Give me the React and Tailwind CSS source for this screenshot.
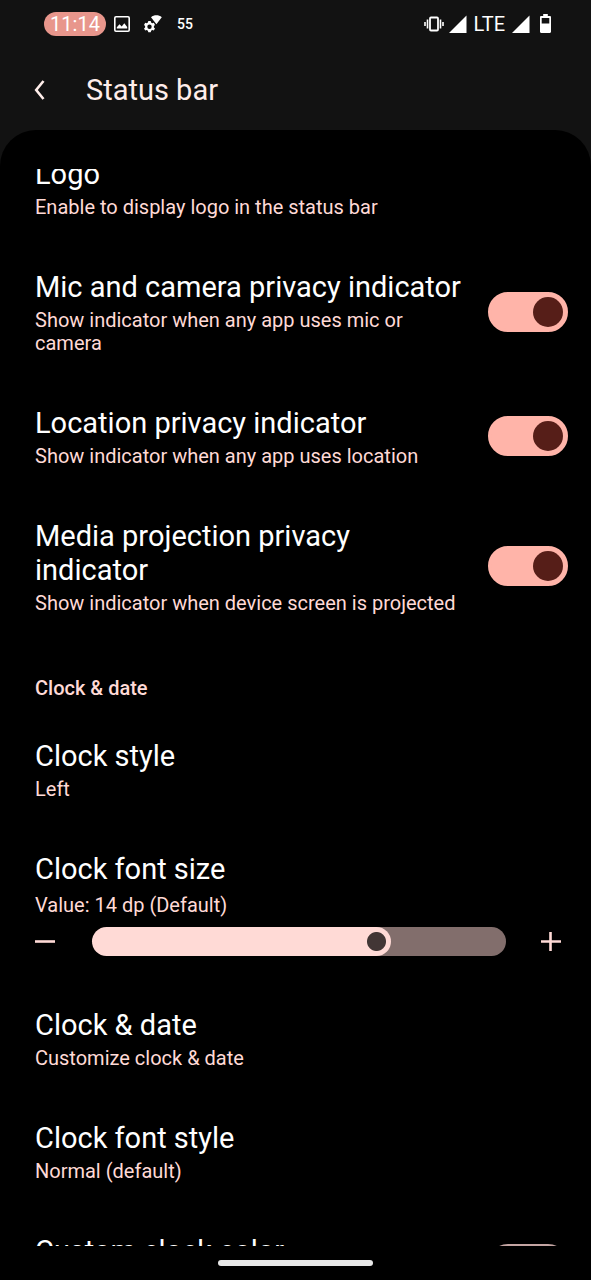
import React, { useState } from "react";

function Switch({ label, checked, onChange }) {
  return (
    <input
      type="checkbox"
      role="switch"
      aria-label={label}
      checked={checked}
      onChange={onChange}
      className="h-10 w-20 shrink-0 cursor-pointer appearance-none rounded-full border-[3px] border-[#c4a5a3] bg-[#2b2221] p-[2px] before:block before:size-[30px] before:rounded-full before:bg-[#a08c8a] checked:border-[#ffb4a9] checked:bg-[#ffb4a9] checked:before:translate-x-10 checked:before:bg-[#561e18]"
    />
  );
}

function Preference({ title, summary, toggle, initial = true }) {
  const [on, setOn] = useState(initial);
  return (
    <section className="flex items-center gap-6 pt-6 pr-[23px] pb-[25px] pl-[35px]">
      <div className="flex flex-1 flex-col gap-[5px] pt-[2px]">
        <h2 className="text-[29px] leading-[34px] text-white">{title}</h2>
        <p className="text-[20px] leading-[23px] text-[#ffdad6]">{summary}</p>
      </div>
      {toggle && <Switch label={title} checked={on} onChange={() => setOn(!on)} />}
    </section>
  );
}

function ClockSize() {
  const [value, setValue] = useState(14);
  const min = 0;
  const max = 20;
  const ratio = (value - min) / (max - min);
  const stop = `calc(14px + (100% - 28px) * ${ratio})`;
  return (
    <section className="pt-[26px] pr-[30px] pb-[26px] pl-[35px]">
      <label htmlFor="clock-size" className="block text-[29px] leading-[34px] text-white">
        Clock font size
      </label>
      <p className="mt-2 text-[20px] leading-[23px] text-[#ffdad6]">
        Value: {value} dp{value === 14 ? " (Default)" : ""}
      </p>
      <div className="mt-[10px] flex items-center">
        <button type="button" aria-label="Decrease" onClick={() => setValue(Math.max(min, value - 1))}>
          <svg viewBox="0 0 20 20" className="size-5" fill="#ffdad6">
            <path d="M0 8.2h20v2.6H0z" />
          </svg>
        </button>
        <input
          id="clock-size"
          type="range"
          min={min}
          max={max}
          value={value}
          onChange={(e) => setValue(Number(e.target.value))}
          style={{ background: `linear-gradient(to right, #ffdad6 ${stop}, #826e6c ${stop})` }}
          className="mr-[35px] ml-[37px] h-[29px] min-w-0 flex-1 cursor-pointer appearance-none rounded-full [&::-webkit-slider-thumb]:size-[29px] [&::-webkit-slider-thumb]:appearance-none [&::-webkit-slider-thumb]:rounded-full [&::-webkit-slider-thumb]:bg-[radial-gradient(circle,#423635_8px,#423635_9px,#ffdad6_10px)]"
        />
        <button type="button" aria-label="Increase" onClick={() => setValue(Math.min(max, value + 1))}>
          <svg viewBox="0 0 20 20" className="size-5" fill="#ffdad6">
            <path d="M0 8.2h8.2V-1h2.6v9.200H20v2.600h-9.200V19H8.200v-8.200H0z" />
          </svg>
        </button>
      </div>
    </section>
  );
}

function ScreenshotIcon() {
  return (
    <svg viewBox="0 0 16 16" className="size-4" fill="none" aria-hidden="true">
      <rect x="0.8" y="0.8" width="14.4" height="14.4" rx="1.2" stroke="#fff" strokeWidth="1.6" />
      <path d="M2.800 12.400V11.200l2.700-3 2.200 2.300 2.600-3.200 2.900 3.600v1.500z" fill="#fff" />
    </svg>
  );
}

function GearWifiIcon() {
  return (
    <svg viewBox="0 0 18 18" className="size-[18px]" fill="#fff" aria-hidden="true">
      <path d="M7 2.200C10 -.300 14.700 -.300 17.800 2.200L12.400 9.200z" />
      <g transform="translate(5.500 11.700)">
        <path
          fillRule="evenodd"
          d="M-1.200-5.600h2.400l.4 1.500 1.200.7 1.500-.5 1.200 2.100-1.100 1.100v1.400l1.100 1.100-1.200 2.100-1.500-.5-1.200.7-.4 1.500h-2.400l-.4-1.500-1.200-.7-1.500.5-1.200-2.100 1.100-1.100v-1.400l-1.100-1.100 1.200-2.100 1.500.5 1.200-.7zM0-2.200a2.200 2.200 0 1 0 0 4.400 2.200 2.200 0 0 0 0-4.400z"
        />
      </g>
    </svg>
  );
}

function VibrateIcon() {
  return (
    <svg viewBox="0 0 20 16" className="h-4 w-5" fill="none" stroke="#fff" aria-hidden="true">
      <rect x="6" y="1.500" width="8" height="13" rx="1" strokeWidth="1.800" />
      <path d="M3.500 3.500v9M16.500 3.500v9M1 6v4M19 6v4" strokeWidth="1.600" />
    </svg>
  );
}

function SignalIcon() {
  return (
    <svg viewBox="0 0 18 18" className="size-[18px]" fill="#fff" aria-hidden="true">
      <path d="M0 18L17.500 .500v17.500z" />
    </svg>
  );
}

function BatteryIcon() {
  return (
    <svg viewBox="0 0 11 19" className="h-[19px] w-[11px]" aria-hidden="true">
      <path
        fill="#fff"
        fillRule="evenodd"
        d="M3.200 0h4.600v2h2c.7 0 1.200.5 1.200 1.200v14.600c0 .7-.5 1.200-1.200 1.200H1.200C.5 19 0 18.500 0 17.800V3.200C0 2.500.5 2 1.200 2h2zM1.700 4v5.500h7.600V4z"
      />
    </svg>
  );
}

export default function App() {
  return (
    <div className="flex h-screen flex-col bg-[#121212] font-[Roboto,sans-serif]">
      <div className="flex h-[47px] shrink-0 items-center justify-between pr-10 pl-11 text-white">
        <div className="flex items-center">
          <span className="flex h-6 w-[62px] items-center justify-center rounded-full bg-[#e8968c] text-[20px] leading-6">
            11:14
          </span>
          <span className="ml-2 flex items-center gap-[14px]">
            <ScreenshotIcon />
            <GearWifiIcon />
            <span className="pl-px text-[14px] leading-4 font-medium">55</span>
          </span>
        </div>
        <div className="flex items-center">
          <VibrateIcon />
          <span className="ml-[5px] flex items-center gap-[7px]">
            <SignalIcon />
            <span className="text-[20px] leading-6">LTE</span>
            <SignalIcon />
          </span>
          <span className="ml-[10px]">
            <BatteryIcon />
          </span>
        </div>
      </div>

      <header className="flex h-[83px] shrink-0 items-center gap-[41px] pt-[3px] pl-[34px]">
        <button type="button" aria-label="Back">
          <svg viewBox="0 0 11 20" className="h-5 w-[11px]" fill="none">
            <path d="M9.500 1L2.200 10l7.300 9" stroke="#ffedea" strokeWidth="2.600" />
          </svg>
        </button>
        <h1 className="text-[29px] leading-[34px] text-[#ffedea]">Status bar</h1>
      </header>

      <div className="flex min-h-0 flex-1 flex-col rounded-t-[36px] bg-black pt-[39px]">
        <main className="min-h-0 flex-1 overflow-hidden">
          <div className="-mt-[38px]">
            <Preference title="Logo" summary="Enable to display logo in the status bar" />
            <Preference toggle title="Mic and camera privacy indicator" summary="Show indicator when any app uses mic or camera" />
            <Preference toggle title="Location privacy indicator" summary="Show indicator when any app uses location" />
            <Preference toggle title="Media projection privacy indicator" summary="Show indicator when device screen is projected" />
            <h2 className="pt-[37px] pb-[13px] pl-[35px] text-[20px] leading-[23px] font-medium text-[#ffdad6]">Clock &amp; date</h2>
            <Preference title="Clock style" summary="Left" />
            <ClockSize />
            <Preference title="Clock &amp; date" summary="Customize clock &amp; date" />
            <Preference title="Clock font style" summary="Normal (default)" />
            <Preference toggle initial={false} title="Custom clock color" summary="Use custom color" />
          </div>
        </main>
        <div className="flex h-[34px] shrink-0 items-center justify-center">
          <span className="h-[6px] w-[155px] rounded-full bg-[#e8e8e8]" />
        </div>
      </div>
    </div>
  );
}
